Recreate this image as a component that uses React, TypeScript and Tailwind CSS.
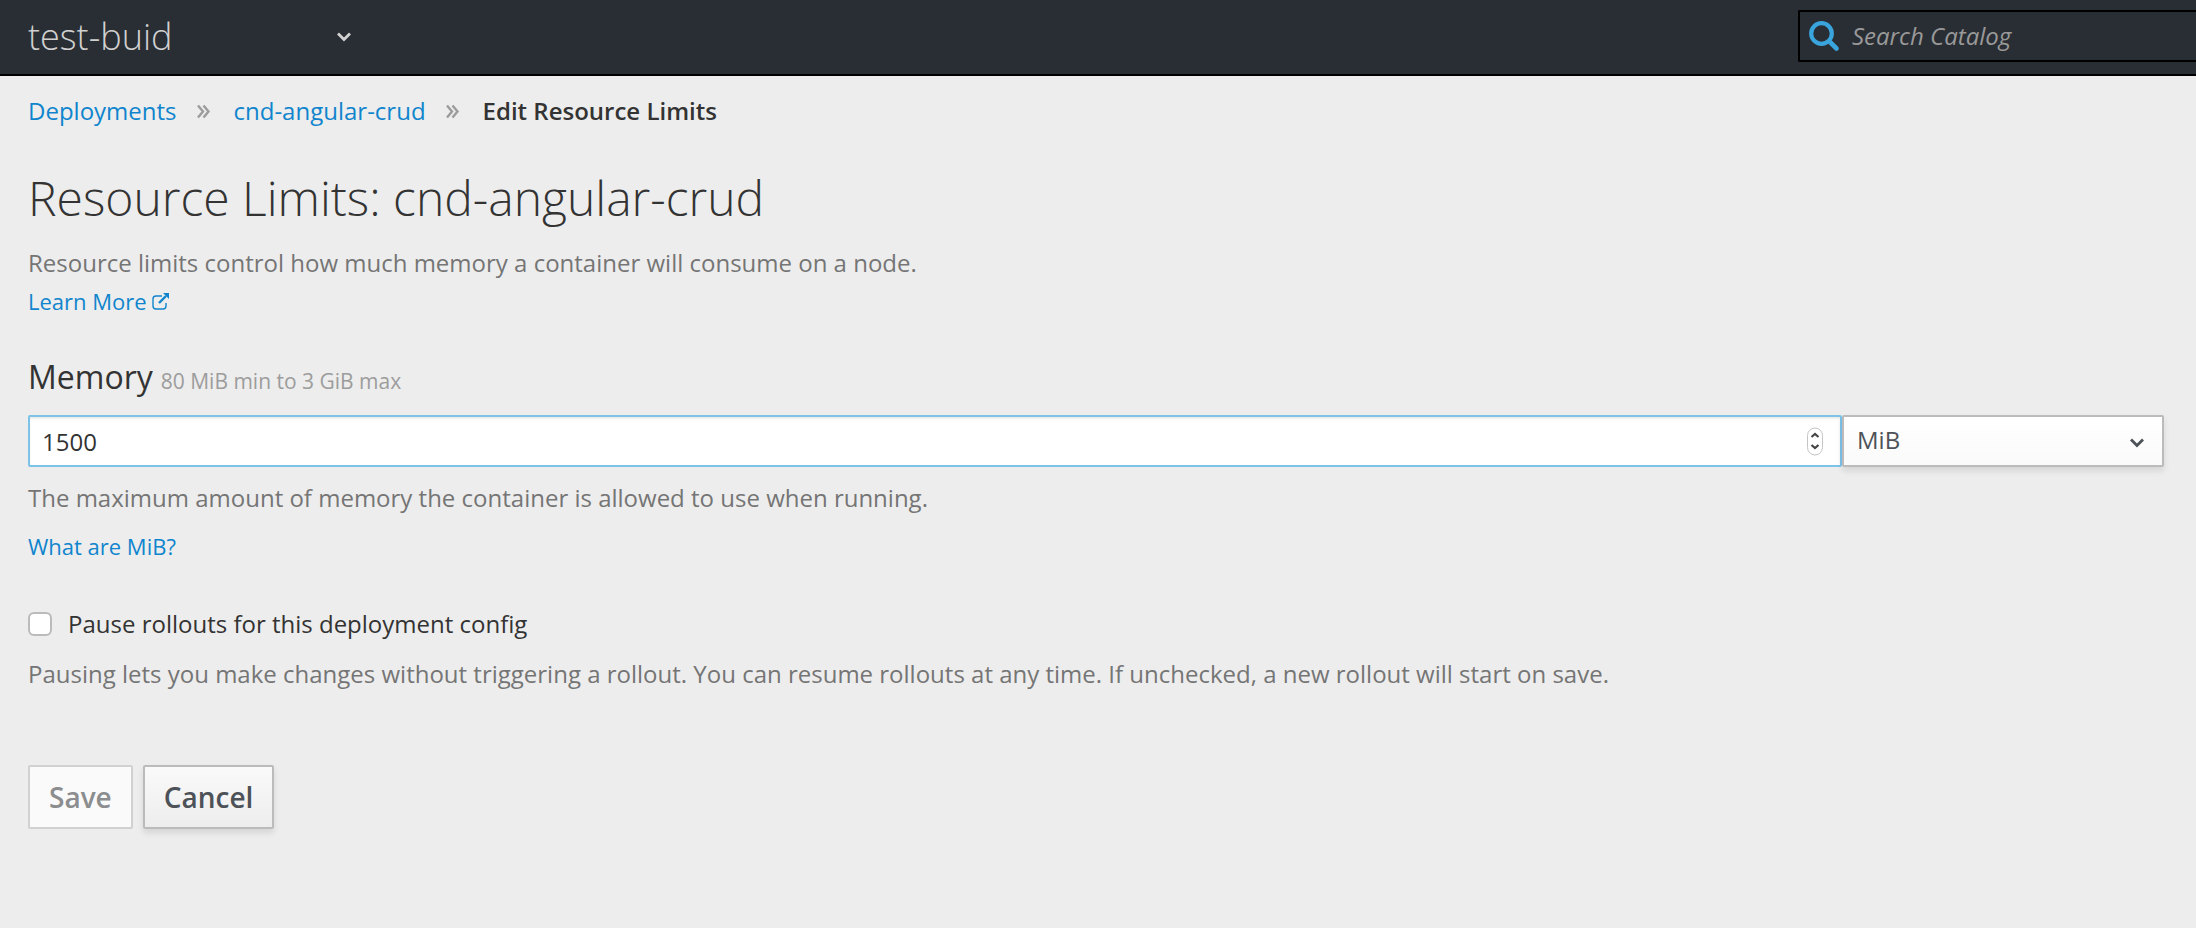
const DoubleAngle = () => (
  <svg className="size-4 text-[#9c9c9c]" viewBox="0 0 16 16" fill="none" stroke="currentColor" strokeWidth="2.4" aria-hidden="true">
    <path d="M2 2.5L7 8.5L2 14.5M7.5 2.5L12.5 8.5L7.5 14.5" />
  </svg>
);

const Angle = ({ className }: { className: string }) => (
  <svg className={className} viewBox="0 0 16 12" fill="none" stroke="currentColor" strokeWidth="2.8" aria-hidden="true">
    <path d="M2 2.5L8 8.5L14 2.5" />
  </svg>
);

const ExternalLink = () => (
  <svg className="size-5" viewBox="0 0 20 20" fill="none" stroke="currentColor" strokeWidth="1.4" aria-hidden="true">
    <path d="M11 5H5A3 3 0 0 0 2 8V15A3 3 0 0 0 5 18H12A3 3 0 0 0 15 15V12" />
    <path d="M8 12L15 5" strokeWidth="2.4" />
    <path d="M12 2H18V8Z" fill="currentColor" stroke="none" />
  </svg>
);

export default function App() {
  return (
    <div className="min-h-screen bg-[#ededed] font-['Open_Sans',sans-serif] text-[24px] leading-10 text-[#333]">
      <header className="flex h-[76px] items-start justify-between border-b-2 border-black bg-[#292e34] pl-7">
        <button type="button" className="flex h-full w-[324px] items-center justify-between text-[36px] font-light text-[#d1d1d1]">
          test-buid
          <Angle className="h-3 w-4" />
        </button>
        <label className="mt-2.5 flex h-[52px] w-[398px] items-center gap-3 rounded-l-[2px] border-2 border-r-0 border-black pl-2">
          <svg className="size-8 shrink-0 text-[#39a5dc]" viewBox="0 0 32 32" fill="none" stroke="currentColor" aria-hidden="true">
            <circle cx="13.5" cy="13.5" r="10.3" strokeWidth="4.2" />
            <path d="M21.5 21.5L28.5 28.5" strokeWidth="4.6" strokeLinecap="round" />
          </svg>
          <input type="text" aria-label="Search Catalog" placeholder="Search Catalog" className="w-full bg-transparent outline-none placeholder:italic placeholder:text-[#999]" />
        </label>
      </header>
      <main className="px-7 pr-8 pt-[15px]">
        <nav aria-label="Breadcrumb">
          <ol className="flex items-center">
            <li><a href="#deployments" className="text-[#1085cd]">Deployments</a></li>
            <li className="flex items-center pl-[19px] pr-[22px]"><DoubleAngle /></li>
            <li><a href="#app" className="text-[#1085cd]">cnd-angular-crud</a></li>
            <li className="flex items-center pl-[19px] pr-[22px]"><DoubleAngle /></li>
            <li className="font-semibold" aria-current="page">Edit Resource Limits</li>
          </ol>
        </nav>
        <h1 className="mt-[37px] text-[48px] font-light leading-[60px]">Resource Limits: cnd-angular-crud</h1>
        <p className="mt-[15px] text-[#757575]">Resource limits control how much memory a container will consume on a node.</p>
        <a href="#learn" className="flex w-fit items-center gap-1 text-[22px] leading-9 text-[#1085cd]">Learn More<ExternalLink /></a>
        <form onSubmit={(event) => event.preventDefault()}>
          <h2 className="mt-[38px] flex items-baseline gap-2 text-[32px]">
            <label htmlFor="memory">Memory</label>
            <small className="text-[21px] text-[#9c9c9c]">80 MiB min to 3 GiB max</small>
          </h2>
          <div className="mt-3.5 flex">
            <div className="relative flex-1">
              <input id="memory" type="number" defaultValue={1500} className="block h-[52px] w-full appearance-none rounded-[2px] border-2 border-[#7dc3e8] bg-white px-3 shadow-[inset_0_2px_2px_rgba(3,3,3,0.075)] outline-none [-moz-appearance:textfield] [&::-webkit-inner-spin-button]:appearance-none" />
              <svg className="pointer-events-none absolute right-[17px] top-2.5 h-8 w-5" viewBox="0 0 20 32" fill="none" aria-hidden="true">
                <rect x="2.5" y="3" width="15" height="27" rx="7.5" fill="#fff" stroke="#c4c4c4" />
                <path d="M6.5 12L10 9L13.5 12M6.5 20L10 23L13.5 20" stroke="#444" strokeWidth="2.2" />
              </svg>
            </div>
            <div className="relative w-[322px]">
              <select aria-label="Memory unit" className="block h-[52px] w-full appearance-none rounded-[2px] border-2 border-[#bbb] bg-linear-to-b from-white to-[#fafafa] px-[13px] pb-0.5 text-[#4d5258] shadow-[0_4px_6px_rgba(3,3,3,0.1)] outline-none">
                <option>MiB</option>
                <option>GiB</option>
              </select>
              <Angle className="pointer-events-none absolute right-[19px] top-[22px] h-3 w-4 text-[#4d5258]" />
            </div>
          </div>
          <p className="mt-[11px] text-[#757575]">The maximum amount of memory the container is allowed to use when running.</p>
          <a href="#mib" className="mt-2 block w-fit text-[22px] text-[#1085cd]">What are MiB?</a>
          <label className="mt-[38px] flex w-fit items-center gap-4">
            <input type="checkbox" className="size-6 appearance-none rounded-[6px] border-2 border-[#bbb] bg-white" />
            Pause rollouts for this deployment config
          </label>
          <p className="mt-2.5 text-[#757575]">Pausing lets you make changes without triggering a rollout. You can resume rollouts at any time. If unchecked, a new rollout will start on save.</p>
          <div className="mt-[71px] flex gap-2.5">
            <button type="submit" disabled className="h-16 rounded-[2px] border-2 border-[#d1d1d1] bg-[#fafafa] px-[19px] text-[28px] font-semibold text-[#8b8d8f]">Save</button>
            <button type="button" className="h-16 rounded-[2px] border-2 border-[#bbb] bg-linear-to-b from-[#fafafa] to-[#ededed] px-[19px] text-[28px] font-semibold text-[#4d5258] shadow-[0_4px_6px_rgba(3,3,3,0.1)]">Cancel</button>
          </div>
        </form>
      </main>
    </div>
  );
}
